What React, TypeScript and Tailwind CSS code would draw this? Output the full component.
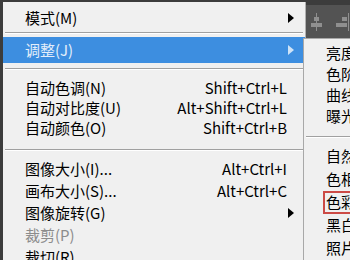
import React from 'react';

type Item =
  | { kind: 'sep'; mt: number; mb: number }
  | { kind: 'item'; label: string; shortcut?: string; sub?: boolean; active?: boolean; disabled?: boolean; h: number };

const mainItems: Item[] = [
  { kind: 'item', label: '模式(M)', sub: true, h: 26 },
  { kind: 'sep', mt: 1, mb: 3 },
  { kind: 'item', label: '调整(J)', sub: true, active: true, h: 26 },
  { kind: 'sep', mt: 5, mb: 8 },
  { kind: 'item', label: '自动色调(N)', shortcut: 'Shift+Ctrl+L', h: 20 },
  { kind: 'item', label: '自动对比度(U)', shortcut: 'Alt+Shift+Ctrl+L', h: 20 },
  { kind: 'item', label: '自动颜色(O)', shortcut: 'Shift+Ctrl+B', h: 20 },
  { kind: 'sep', mt: 11, mb: 7 },
  { kind: 'item', label: '图像大小(I)...', shortcut: 'Alt+Ctrl+I', h: 22 },
  { kind: 'item', label: '画布大小(S)...', shortcut: 'Alt+Ctrl+C', h: 22 },
  { kind: 'item', label: '图像旋转(G)', sub: true, h: 22 },
  { kind: 'item', label: '裁剪(P)', disabled: true, h: 22 },
  { kind: 'item', label: '裁切(R)...', h: 22 },
];

const font = { fontFamily: '"Noto Sans CJK SC", "Noto Sans", sans-serif' };

const Arrow = ({ light }: { light?: boolean }) => (
  <svg width="6" height="10" viewBox="0 0 6 10" className="shrink-0">
    <path d="M0 0 L6 5 L0 10 Z" fill={light ? '#cfe3f7' : '#000'} />
  </svg>
);

const MenuRow = ({ item }: { item: Extract<Item, { kind: 'item' }> }) => (
  <div
    className={`flex items-center pl-[22px] pr-[11px] text-[15px] ${
      item.active ? 'bg-[#3d8ee0] text-[#e3eefa]' : item.disabled ? 'text-[#8c8c8c]' : 'text-black'
    }`}
    style={{ height: item.h }}
  >
    <span className="flex-1 whitespace-nowrap">{item.label}</span>
    {item.shortcut && <span className="whitespace-nowrap pr-[7px]">{item.shortcut}</span>}
    {item.sub && <Arrow light={item.active} />}
  </div>
);

const Separator = ({ mt, mb }: { mt: number; mb: number }) => (
  <div
    className="mx-[2px] h-[2px] border-t border-[#a0a0a0] border-b border-b-white"
    style={{ marginTop: mt, marginBottom: mb }}
  />
);

const subTop = ['亮度/对比度(C)...', '色阶(L)...', '曲线(U)...', '曝光度(E)...'];
const subBottom = ['自然饱和度(V)...', '色相/饱和度(H)...', '色彩平衡(B)...', '黑白(K)...', '照片滤镜(F)...'];

export default function App() {
  return (
    <div className="relative w-[350px] h-[260px] overflow-hidden bg-[#3c3c3c]" style={font}>
      {/* background toolbar */}
      <div className="absolute right-0 top-[5px] w-[60px] h-[34px] bg-[#535353] flex items-center justify-end gap-[12px]">
        <svg width="14" height="18" viewBox="0 0 14 18">
          <rect x="6" y="0" width="1" height="18" fill="#8f8f8f" />
          <rect x="4" y="4" width="5" height="4" fill="#8f8f8f" />
          <rect x="1" y="10" width="11" height="4" fill="#8f8f8f" />
        </svg>
        <svg width="14" height="18" viewBox="0 0 14 18">
          <rect x="12" y="0" width="1" height="18" fill="#8f8f8f" />
          <rect x="6" y="4" width="5" height="4" fill="#8f8f8f" />
          <rect x="0" y="10" width="11" height="4" fill="#8f8f8f" />
        </svg>
      </div>

      {/* main menu */}
      <div className="absolute left-[3px] top-[2px] w-[303px] bg-[#f0f0f0] border-r border-[#b0b0b0] pt-[3px] pb-[4px]">
        {mainItems.map((it, i) =>
          it.kind === 'sep' ? <Separator key={i} mt={it.mt} mb={it.mb} /> : <MenuRow key={i} item={it} />
        )}
      </div>

      {/* submenu */}
      <div className="absolute left-[303px] top-[38px] w-[140px] bg-[#f0f0f0] border-l border-t border-[#a8a8a8] pt-[4px]">
        {subTop.map((t) => (
          <div key={t} className="h-[21px] flex items-center pl-[22px] text-[15px] text-black whitespace-nowrap">
            {t}
          </div>
        ))}
        <div className="mt-[9px] mb-[7px] mx-[2px] h-[2px] border-t border-[#a0a0a0] border-b border-b-white" />
        {subBottom.map((t) => (
          <div key={t} className="h-[23px] flex items-center pl-[19px] text-[15px] text-black whitespace-nowrap">
            <span
              className={`pl-[1px] pr-[4px] h-[23px] flex items-center border-2 ${
                t.startsWith('色彩') ? 'border-[#cc4a45]' : 'border-transparent'
              }`}
            >
              {t}
            </span>
          </div>
        ))}
      </div>
    </div>
  );
}
